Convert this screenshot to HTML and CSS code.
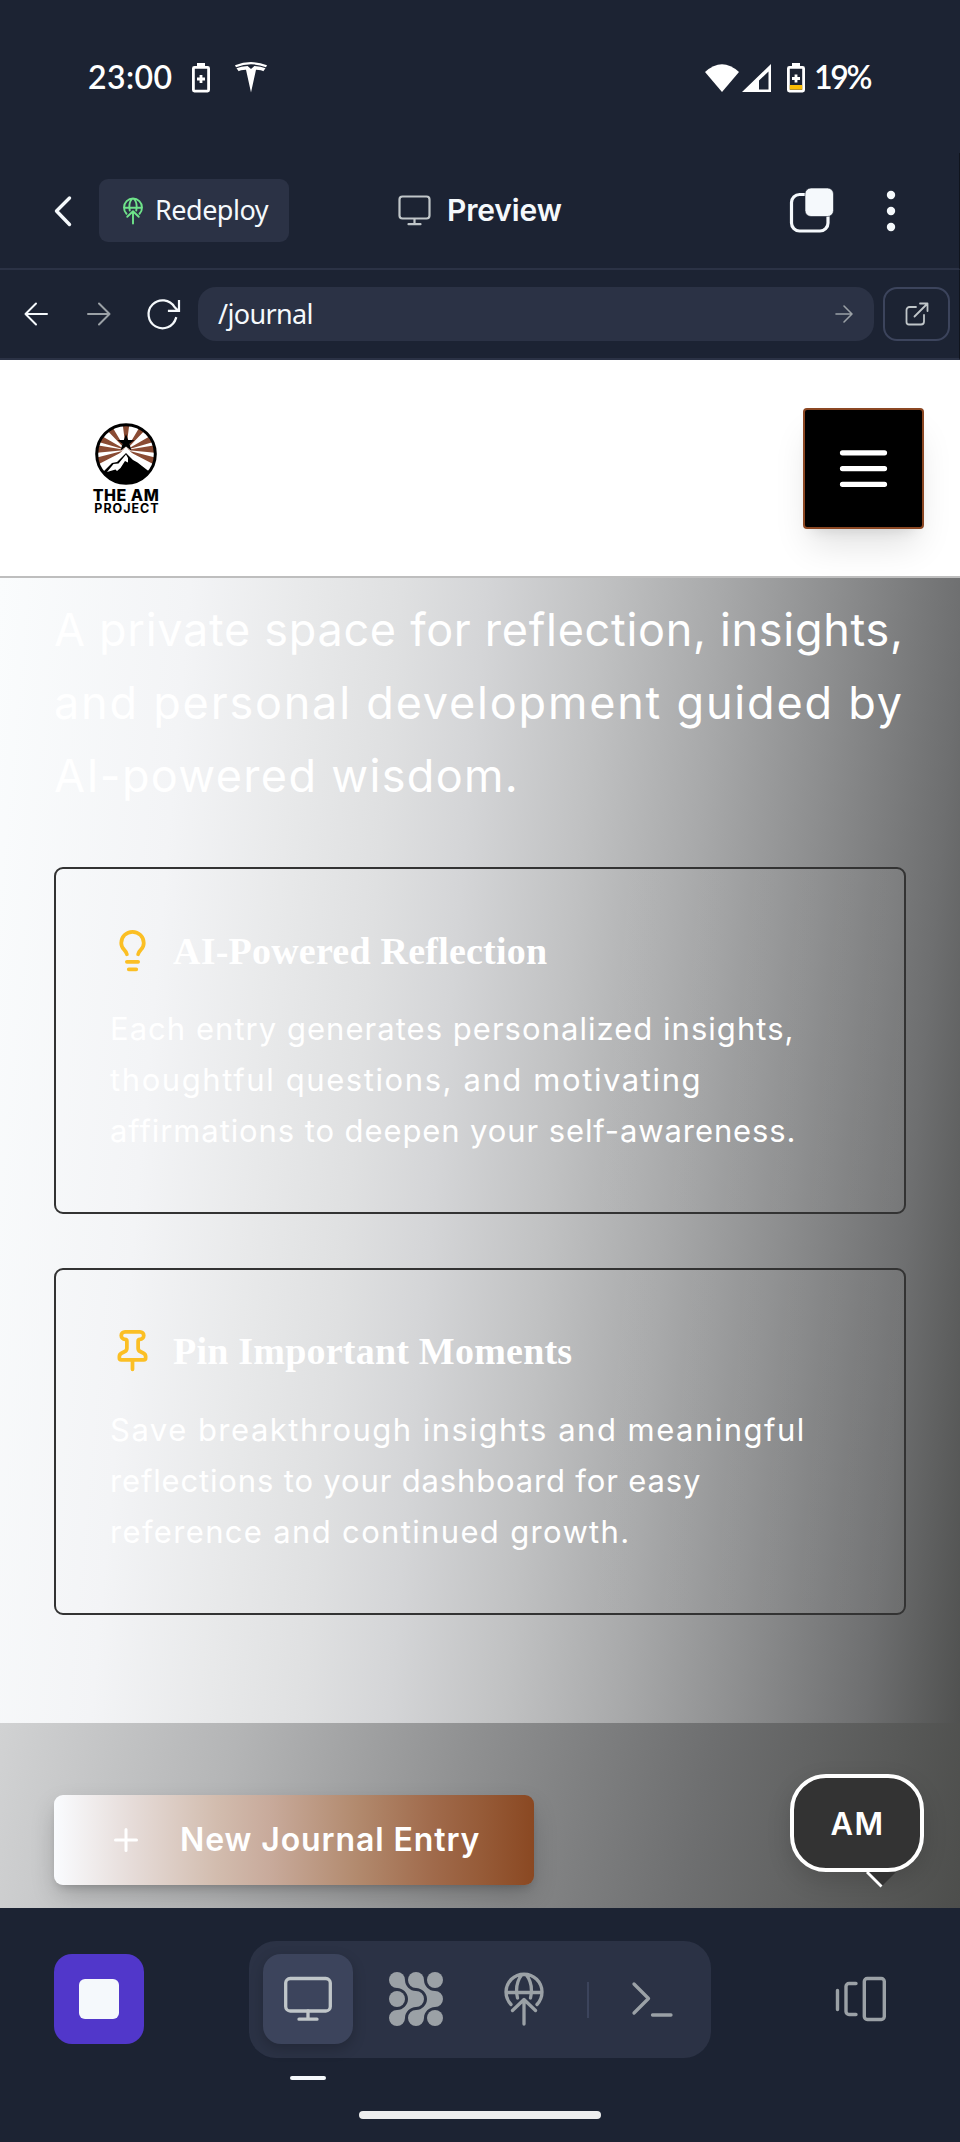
FILE: index.html
```html
<!DOCTYPE html>
<html lang="en">
<head>
<meta charset="utf-8">
<title>Preview</title>
<link rel="stylesheet" href="styles.css">
</head>
<body>
<div class="screen">
  <div class="statusbar">
    <span class="clock">23:00</span>
    <svg class="st-batt" width="18" height="30" viewBox="0 0 18 30"><path d="M5 0h8v3H5z" fill="#fff"/><rect x="1.4" y="4.4" width="15.2" height="23.7" rx="1" fill="none" stroke="#fff" stroke-width="2.8"/><path d="M9 12v8M5 16h8" stroke="#fff" stroke-width="2.8"/></svg>
    <svg class="st-tesla" width="32" height="31" viewBox="0 0 32 31" fill="#fff"><path d="M0 3.2Q16-3 32 3.2L31 5.2Q16-.6 1 5.200Z"/><path d="M1.500 6.300Q6 4 12.600 3.900L16 7l3.400-3.100Q26 4 30.500 6.300L28.300 9.300Q27 8 21 7.800L16 30.500 11 7.800Q5 8 3.700 9.300Z"/></svg>
    <svg class="st-wifi" width="34" height="28" viewBox="0 0 34 28"><path d="M0 8Q17-7.500 34 8L17 28Z" fill="#fff"/></svg>
    <svg class="st-cell" width="29" height="28" viewBox="0 0 29 28"><path d="M29 0v28H0ZM26.500 7.500L17 16.500V25.500h9.500Z" fill="#fff" fill-rule="evenodd"/></svg>
    <svg class="st-batt2" width="18" height="30" viewBox="0 0 18 30"><path d="M5 0h8v3H5z" fill="#fff"/><rect x="1.400" y="4.400" width="15.200" height="23.700" rx="1" fill="none" stroke="#fff" stroke-width="2.800"/><path d="M2.800 22h12.400v4.600H2.800z" fill="#fbbc04"/><path d="M9 11.500v8M5 15.500h8" stroke="#fff" stroke-width="2.800"/></svg>
    <span class="percent">19%</span>
  </div>
  <div class="toolbar">
    <svg class="back" width="20" height="34" viewBox="0 0 20 34"><path d="M16.500 4L3.500 17l13 13.500" fill="none" stroke="#f5f9fc" stroke-width="3.400" stroke-linecap="round" stroke-linejoin="round"/></svg>
    <div class="redeploy">
      <svg width="22" height="28" viewBox="0 0 42 56" fill="none" stroke="#6fe48a" stroke-width="3.800" stroke-linecap="round" stroke-linejoin="round"><use href="#globe"/></svg>
      <span>Redeploy</span>
    </div>
    <div class="title">
      <svg width="33" height="31" viewBox="0 0 33 31" fill="none" stroke="#c0c6c9" stroke-width="2.200" stroke-linecap="round"><rect x="1.500" y="1.500" width="30" height="22" rx="3"/><path d="M16.500 24v5M10.500 29.200h12"/></svg>
      <span>Preview</span>
    </div>
    <svg class="copy" width="46" height="46" viewBox="0 0 46 46"><rect x="2.500" y="7.500" width="36.500" height="36.500" rx="8" fill="none" stroke="#f5f9fc" stroke-width="3.200"/><rect x="16" y="1" width="28.500" height="28.500" rx="6" fill="#f5f9fc" stroke="#1c2333" stroke-width=".6"/></svg>
    <svg class="dots" width="10" height="42" viewBox="0 0 10 42" fill="#f5f9fc"><circle cx="5" cy="5" r="4.200"/><circle cx="5" cy="21" r="4.200"/><circle cx="5" cy="37" r="4.200"/></svg>
  </div>
  <div class="addressbar">
    <svg class="a-back" width="26" height="26" viewBox="0 0 26 26" fill="none" stroke="#f5f9fc" stroke-width="2" stroke-linecap="round" stroke-linejoin="round"><path d="M24 13H2.500M13 2.500L2.500 13 13 23.500"/></svg>
    <svg class="a-fwd" width="26" height="26" viewBox="0 0 26 26" fill="none" stroke="#9ba1a6" stroke-width="2" stroke-linecap="round" stroke-linejoin="round"><path d="M2 13h21.500M13 2.500L23.500 13 13 23.500"/></svg>
    <svg class="a-reload" width="36" height="32" viewBox="0 0 36 32" fill="none" stroke="#f5f9fc" stroke-width="2.200" stroke-linecap="square"><path d="M30 20.200A14 14 0 1 1 28.500 9L32 12.500M23 12.800H33V3"/></svg>
    <div class="url"><span>/journal</span>
      <svg width="20" height="20" viewBox="0 0 20 20" fill="none" stroke="#9ba1a6" stroke-width="1.600" stroke-linecap="round" stroke-linejoin="round"><path d="M2 10h16M10 2l8 8-8 8"/></svg>
    </div>
    <div class="external">
      <svg width="24" height="24" viewBox="0 0 24 24" fill="none" stroke="#c0c6c9" stroke-width="1.800" stroke-linecap="round" stroke-linejoin="round"><path d="M11 5H4.500A3 3 0 0 0 1.500 8V20a2.500 2.500 0 0 0 2.500 2.500H16a3 3 0 0 0 3-3V13M9.500 14.500L22.500 1.500M15 1.500h7.500V9"/></svg>
    </div>
  </div>

  <main class="page">
    <header class="site-header">
      <div class="logo">
        <svg width="62" height="62" viewBox="0 0 62 62">
          <clipPath id="disc"><circle cx="31" cy="31" r="29"/></clipPath>
          <g clip-path="url(#disc)">
            <rect width="62" height="62" fill="#fff"/>
            <path fill="#8a4b33" d="M31 27L0 43V35ZM31 27L0 30V22ZM31 27L0 18V9ZM31 27L8 3 15 0ZM31 27L27.500 0h7ZM31 27L54 3 47 0ZM31 27L62 9v9ZM31 27L62 22v8ZM31 27L62 35v8Z"/>
            <path fill="#fff" d="M31 24L4 52h54Z"/>
            <path d="M31 11l2.200 6h6.300l-5 4 1.900 6.500L31 23.500 25.600 27.500l1.900-6.500-5-4h6.300Z"/>
            <path d="M31 30L38 37l4.500 2.500L56 50V62H6V51L17 40l5-1Z"/>
            <path fill="#fff" d="M31 31.500l2 3.500v4.500l-3-1.500-4.500 7-3.500 3-1.500-1.500L12 49l6.500-8 5-.5Z"/>
          </g>
          <circle cx="31" cy="31" r="29.300" fill="none" stroke="#000" stroke-width="3"/>
        </svg>
        <span class="logo-top">THE AM</span>
        <span class="logo-bottom">PROJECT</span>
      </div>
      <div class="menu">
        <svg width="63" height="63" viewBox="0 0 24 24" stroke="#fff" stroke-width="2" stroke-linecap="round"><path d="M4 6h16M4 12h16M4 18h16"/></svg>
      </div>
    </header>
    <section class="hero">
      <p class="intro"><span class="l1">A private space for reflection, insights,</span><span class="l2">and personal development guided by</span><span class="l3">AI-powered wisdom.</span></p>
      <article class="card">
        <h3><svg width="45" height="45" viewBox="0 0 24 24" fill="none" stroke="#fbbf24" stroke-width="2" stroke-linecap="round" stroke-linejoin="round"><path d="M15 14c.2-1 .7-1.700 1.500-2.500 1-.9 1.500-2.200 1.500-3.500A6 6 0 0 0 6 8c0 1 .2 2.200 1.500 3.500.7.7 1.300 1.500 1.500 2.500M9 18h6M10 22h4"/></svg><span>AI-Powered Reflection</span></h3>
        <p><span class="c1">Each entry generates personalized insights,</span><span class="c2">thoughtful questions, and motivating</span><span class="c3">affirmations to deepen your self-awareness.</span></p>
      </article>
      <article class="card">
        <h3><svg width="45" height="45" viewBox="0 0 24 24" fill="none" stroke="#fbbf24" stroke-width="2" stroke-linecap="round" stroke-linejoin="round"><path d="M12 17v5M9 10.760a2 2 0 0 1-1.110 1.790l-1.780.9A2 2 0 0 0 5 15.240V16a1 1 0 0 0 1 1h12a1 1 0 0 0 1-1v-.76a2 2 0 0 0-1.110-1.790l-1.780-.9A2 2 0 0 1 15 10.760V7a1 1 0 0 1 1-1 2 2 0 0 0 0-4H8a2 2 0 0 0 0 4 1 1 0 0 1 1 1z"/></svg><span>Pin Important Moments</span></h3>
        <p><span class="c4">Save breakthrough insights and meaningful</span><span class="c5">reflections to your dashboard for easy</span><span class="c6">reference and continued growth.</span></p>
      </article>
    </section>
    <section class="actions">
      <div class="new-entry">
        <svg width="26" height="26" viewBox="0 0 26 26" stroke="#fff" stroke-width="3" stroke-linecap="round"><path d="M13 2.500v21M2.500 13h21"/></svg>
        <span>New Journal Entry</span>
      </div>
      <div class="bubble"><span>AM</span>
        <svg class="tail" width="32" height="17" viewBox="0 0 32 17"><path d="M1 0h29L16 14Z" fill="#333"/><path d="M1 0l14.500 14.500" stroke="#fff" stroke-width="2.800"/></svg>
      </div>
    </section>
  </main>

  <nav class="dock">
    <div class="dock-row">
      <div class="stop"><i></i></div>
      <div class="tabs">
        <div class="tab active">
          <svg width="50" height="46" viewBox="0 0 50 46" fill="none" stroke="#c0c6c9" stroke-width="3.300" stroke-linecap="round"><rect x="2.700" y="2.500" width="44.600" height="32.500" rx="4.500"/><path d="M25 35v8M16 43.200h18"/></svg>
        </div>
        <div class="tab">
          <svg width="54" height="54" viewBox="0 0 54 54" fill="#9ba1a6">
            <circle cx="8" cy="8" r="8"/><circle cx="27" cy="8" r="8"/><circle cx="46" cy="8" r="8"/><circle cx="8" cy="27" r="8"/><circle cx="46" cy="46" r="8"/>
            <path d="M16 8c0 6 5 11 11 11a8 8 0 0 1 0 16C21 35 16 40 16 46a8 8 0 1 1-8-8C14 38 19 33 19 27S14 16 8 16Z"/>
            <path d="M35 8c0 6 5 11 11 11a8 8 0 0 1 0 16C40 35 35 40 35 46a8 8 0 1 1-8-8C33 38 38 33 38 27S33 16 27 16Z"/>
          </svg>
        </div>
        <div class="tab">
          <svg width="42" height="56" viewBox="0 0 42 56" fill="none" stroke="#9ba1a6" stroke-width="3.300" stroke-linecap="round" stroke-linejoin="round"><g id="globe"><path d="M8 33.500A18 18 0 1 1 34 33.500M3 21.500H39M14.500 27C12.500 18 14.500 9 19 3.500h4C27.500 9 29.500 18 27.500 27M21 53V29M9.500 39.500L21 28.500 32.500 39.500"/></g></svg>
        </div>
        <div class="divider"></div>
        <div class="tab last">
          <svg width="42" height="36" viewBox="0 0 42 36" fill="none" stroke="#9ba1a6" stroke-width="3.300" stroke-linecap="round" stroke-linejoin="round"><path d="M3 3l14.500 14.500L3 32M21.500 34H40"/></svg>
        </div>
      </div>
      <svg class="devices" width="52" height="46" viewBox="0 0 52 46" fill="none" stroke="#9ba1a6" stroke-width="3.400" stroke-linecap="round"><path d="M2.500 14.500v19M21 7.500h-7a3 3 0 0 0-3 3V35.500a3 3 0 0 0 3 3h7"/><rect x="29.300" y="2.500" width="20" height="41" rx="3"/></svg>
    </div>
    <div class="underline"></div>
    <div class="home"></div>
  </nav>
</div>
</body>
</html>
```

FILE: styles.css
```css
* { box-sizing: border-box; }
body { margin: 0; background: #1c2333; }
svg { display: block; flex: none; overflow: visible; }
span { white-space: nowrap; }
.screen { width: 960px; height: 2142px; display: flex; flex-direction: column; overflow: hidden; background: #1c2333; font-family: Inter, "Liberation Sans", sans-serif; }

/* Phone status bar */
.statusbar { height: 153px; display: flex; align-items: center; color: #fff; font-weight: 500; padding: 2px 89px 0 88px; }
.clock { width: 84px; font: 600 32px/40px Lato, sans-serif; letter-spacing: .4px; padding-bottom: 1px; }
.st-batt { margin-left: 20px; }
.st-tesla { margin-left: 25px; }
.st-wifi { margin-left: auto; }
.st-cell { margin-left: 3px; }
.st-batt2 { margin-left: 16px; }
.percent { margin-left: 9px; width: 57px; font: 600 32px/40px Lato, sans-serif; letter-spacing: -2.300px; padding-bottom: 1px; }

/* Preview toolbar */
.toolbar { height: 117px; border-bottom: 2px solid #2b3245; border-right: 1px solid #10141d; display: flex; align-items: center; padding: 0 63px 0 53px; }
.redeploy { margin-left: 26px; width: 190px; height: 63px; border-radius: 9px; background: #2b3245; display: flex; align-items: center; padding-left: 23px; gap: 11px; color: #f5f9fc; font: 400 27px/36px "Noto Sans", sans-serif; }
.redeploy span { letter-spacing: -.5px; padding-bottom: 1px; }
.title { margin-left: 109px; display: flex; align-items: center; gap: 16px; color: #f5f9fc; font-size: 30px; font-weight: 600; line-height: 36px; letter-spacing: -.15px; padding-bottom: 1px; }
.copy { margin-left: auto; margin-bottom: 2px; }
.dots { margin-left: 51px; }

/* Address bar */
.addressbar { height: 90px; border-bottom: 2px solid #2b3245; border-right: 1px solid #10141d; display: flex; align-items: center; padding: 0 9px 0 23px; }
.a-fwd { margin-left: 37px; }
.a-reload { margin-left: 34px; }
.url { margin-left: 16px; width: 676px; height: 54px; border-radius: 18px; background: #2b3245; color: #f5f9fc; display: flex; align-items: center; justify-content: space-between; padding: 0 20px; font: 400 27px/36px "Noto Sans", sans-serif; letter-spacing: -.65px; }
.external { margin-left: 9px; width: 67px; height: 54px; border: 2px solid #3c445c; border-radius: 14px; display: flex; align-items: center; justify-content: center; }

/* Previewed site */
.page { height: 1548px; display: flex; flex-direction: column; overflow: hidden; color: #fff; }
.site-header { height: 218px; background: #fff; border-bottom: 2px solid #bebebe; display: flex; justify-content: space-between; align-items: flex-start; padding: 48px 36px 0 90px; }
.logo { width: 72px; padding-top: 15px; display: flex; flex-direction: column; align-items: center; color: #000; }
.logo-top { margin-top: 3px; font-size: 16px; font-weight: 800; line-height: 14px; letter-spacing: .5px; }
.logo-bottom { font-size: 12.500px; font-weight: 700; line-height: 13px; letter-spacing: 1px; padding: 0 0 0 2px; }
.menu { width: 121px; height: 121px; background: #000; border: 2px solid #8b4723; border-radius: 4px; display: flex; align-items: center; justify-content: center; box-shadow: 0 22px 34px -7px rgba(0,0,0,.12), 0 9px 14px -9px rgba(0,0,0,.12); }
.hero { height: 1145px; padding: 15px 54px 0; background: linear-gradient(95deg, #fafcfd 0%, #f3f4f6 18%, #e8e9ea 29%, #dfe0e1 38%, #d4d5d7 46%, #c0c1c2 57%, #a8a9aa 68%, #8d8e8f 79%, #6e6f70 91%, #505150 100%); }
.intro { margin: 0 0 55px; font-size: 45px; font-weight: 400; line-height: 73px; }
.intro span, .card p span { display: block; width: max-content; }
.l1 { letter-spacing: .7px; }
.l2 { letter-spacing: 1.800px; }
.l3 { letter-spacing: 1.350px; }
.card { height: 347px; border: 2px solid #333; border-radius: 9px; padding: 54px; background: linear-gradient(95deg, rgba(255,255,255,0) 60%, rgba(255,255,255,.05)); }
.card + .card { margin-top: 54px; }
.card h3 { margin: 5px 0 0; height: 45px; display: flex; align-items: center; gap: 18px; font: 700 38px/50px "Liberation Serif", serif; letter-spacing: .22px; }
.card + .card h3 { margin-top: 4px; }
.card p { margin: 30px 0 0; font-size: 31px; line-height: 51.200px; font-weight: 400; }
.card + .card p { margin-top: 31px; }
.c1 { letter-spacing: 1.030px; }
.c2 { letter-spacing: 1.590px; }
.c3 { letter-spacing: .9px; }
.c4 { letter-spacing: 1.490px; }
.c5 { letter-spacing: .84px; }
.c6 { letter-spacing: 1.340px; }
.actions { height: 185px; padding: 51px 36px 0 54px; display: flex; justify-content: space-between; align-items: flex-start; background: linear-gradient(100deg, #d1d2d3 0%, #b4b5b6 24%, #8f9091 48%, #6e6f70 72%, #4d4e4c 100%); }
.new-entry { margin-top: 21px; width: 480px; height: 90px; border-radius: 9px; background: linear-gradient(90deg, #fafcff 0%, #e6dcd9 16%, #d2bcae 34%, #c8aa9b 45%, #b28a6e 63%, #a06a4b 79%, #965b38 89%, #8a4822 100%); box-shadow: 0 11px 26px -3px rgba(0,0,0,.22), 0 5px 9px -4px rgba(0,0,0,.2); display: flex; align-items: center; padding-left: 59px; gap: 41px; font-size: 32px; font-weight: 600; letter-spacing: .9px; }
.new-entry span { padding-bottom: 2px; }
.bubble { position: relative; width: 134px; height: 98px; border: 4px solid #fff; border-radius: 36px; background: #333; display: flex; align-items: center; justify-content: center; font-size: 31px; font-weight: 600; letter-spacing: 1.500px; padding: 0 0 0 1px; box-shadow: 0 9px 24px rgba(0,0,0,.14); }
.tail { position: absolute; left: 72px; top: 94px; }

/* Bottom dock */
.dock { height: 234px; padding: 33px 72px 0 54px; }
.dock-row { height: 117px; display: flex; align-items: center; }
.stop { width: 90px; height: 90px; margin-bottom: 1px; border-radius: 18px; background: #5137ca; display: flex; align-items: center; justify-content: center; }
.stop i { width: 40px; height: 40px; border-radius: 6px; background: #f5f9fc; }
.tabs { margin-left: 105px; width: 462px; height: 117px; border-radius: 27px; background: #2b3245; display: flex; align-items: center; padding-left: 14px; }
.tab { width: 90px; height: 90px; margin: 0 18px 1px 0; border-radius: 18px; display: flex; align-items: center; justify-content: center; }
.tab.active { background: #3c445c; box-shadow: 0 5px 14px rgba(0,0,0,.2); }
.divider { width: 2px; height: 36px; background: #3c445c; }
.tab.last { margin: 0 0 1px 18px; }
.devices { margin: 0 1px 1px auto; }
.underline { margin: 18px 0 0 236px; width: 36px; height: 4px; border-radius: 2px; background: #f5f9fc; }
.home { margin: 31px 0 0 305px; width: 242px; height: 8px; border-radius: 4px; background: #edeeef; }
```
